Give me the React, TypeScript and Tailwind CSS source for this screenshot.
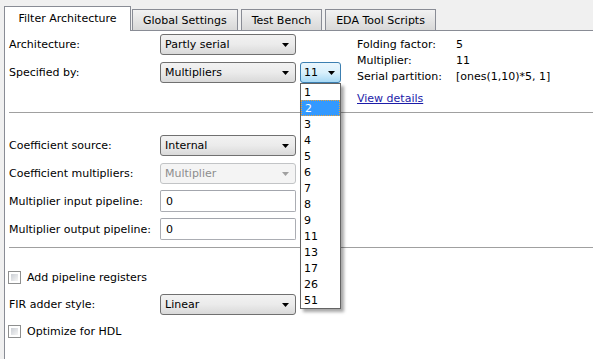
import React from "react";

const font = { fontFamily: '"DejaVu Sans", Verdana, sans-serif' };

function Arrow({ disabled }: { disabled?: boolean }) {
  return (
    <svg width="7" height="4" viewBox="0 0 7 4" className="shrink-0">
      <path d="M0 0h7L3.5 4z" fill={disabled ? "#a0a0a0" : "#000"} />
    </svg>
  );
}

function Select({ value, disabled }: { value: string; disabled?: boolean }) {
  return (
    <div
      className={`flex h-[21px] w-[136px] items-center justify-between rounded-[3px] border pl-[4px] pr-[6px] ${
        disabled
          ? "border-[#c2c4c6] bg-[#f4f4f4] text-[#8d8d8d]"
          : "border-[#707070] bg-gradient-to-b from-[#f2f2f2] via-[#ebebeb] to-[#d9d9d9] text-black"
      }`}
    >
      <span>{value}</span>
      <Arrow disabled={disabled} />
    </div>
  );
}

function TextInput({ value }: { value: string }) {
  return (
    <div className="flex h-[22px] w-[136px] items-center rounded-[2px] border border-[#abadb3] border-t-[#a3a6ad] bg-white pl-[5px]">
      {value}
    </div>
  );
}

function Row({ label, children }: { label: string; children: React.ReactNode }) {
  return (
    <div className="flex items-center">
      <span className="w-[151px] shrink-0">{label}</span>
      {children}
    </div>
  );
}

function Checkbox({ label }: { label: string }) {
  return (
    <div className="flex h-[21px] items-center gap-[6px]">
      <span className="h-[13px] w-[13px] border border-[#8e8f8f] bg-white p-[2px]">
        <span className="block h-full w-full bg-gradient-to-br from-[#cbcfd5] to-[#f6f6f6]" />
      </span>
      <span>{label}</span>
    </div>
  );
}

function Tab({ label, active }: { label: string; active?: boolean }) {
  if (active)
    return (
      <div className="relative z-10 -mb-[1px] flex h-[25px] w-[127px] items-center justify-center border border-b-0 border-[#898c95] bg-white pb-[1px]">
        {label}
      </div>
    );
  return (
    <div className="flex h-[21px] items-center border border-b-0 border-[#898c95] bg-gradient-to-b from-[#f2f2f2] to-[#d8d8d8] px-[10px]">
      {label}
    </div>
  );
}

const items = ["1", "2", "3", "4", "5", "6", "7", "8", "9", "11", "13", "17", "26", "51"];

export default function App() {
  return (
    <div
      className="relative flex h-[359px] w-[593px] flex-col overflow-hidden bg-[#f0f0f0] text-[11px] leading-none text-black"
      style={font}
    >
      <div className="flex h-[30px] shrink-0 items-end gap-[1px] pl-[4px]">
        <Tab label="Filter Architecture" active />
        <Tab label="Global Settings" />
        <div className="w-[1px]" />
        <Tab label="Test Bench" />
        <div className="w-[1px]" />
        <Tab label="EDA Tool Scripts" />
      </div>

      <div className="ml-[4px] flex-1 border-t border-l border-[#898c95] bg-white">
        <div className="flex h-[81px]">
          <div className="flex flex-col gap-[7px] pt-[3px] pl-[4px]">
            <Row label="Architecture:">
              <Select value="Partly serial" />
            </Row>
            <Row label="Specified by:">
              <Select value="Multipliers" />
            </Row>
          </div>

          <div className="relative ml-[4px] pt-[31px]">
            <div className="flex h-[21px] w-[41px] items-center justify-between rounded-[3px] border border-[#3c7fb1] bg-gradient-to-b from-[#eaf6fd] via-[#d9f0fc] to-[#a7d9f5] pl-[3px] pr-[5px]">
              <span>11</span>
              <Arrow />
            </div>
            <div className="absolute top-[52px] left-0 z-20 w-[41px] border border-[#646464] bg-white shadow-[3px_3px_3px_rgba(0,0,0,0.35)]">
              {items.map((v) => (
                <div
                  key={v}
                  className={`flex h-[16px] items-center pl-[3px] ${
                    v === "2"
                      ? "border border-dotted border-[#e8a33b] bg-[#3399ff] pl-[2px] text-white"
                      : ""
                  }`}
                >
                  {v}
                </div>
              ))}
            </div>
          </div>

          <div className="ml-[16px] flex flex-col pt-[5px]">
            <div className="flex h-[16px] items-center">
              <span className="w-[99px]">Folding factor:</span>
              <span>5</span>
            </div>
            <div className="flex h-[16px] items-center">
              <span className="w-[99px]">Multiplier:</span>
              <span>11</span>
            </div>
            <div className="flex h-[16px] items-center">
              <span className="w-[99px]">Serial partition:</span>
              <span>[ones(1,10)*5, 1]</span>
            </div>
            <div className="mt-[6px] flex h-[16px] items-center">
              <span className="text-[#1c1ca8] underline">View details</span>
            </div>
          </div>
        </div>

        <div className="ml-[4px] h-[1px] bg-[#a0a0a0]" />

        <div className="flex h-[134px] flex-col pt-[22px] pl-[4px]">
          <Row label="Coefficient source:">
            <Select value="Internal" />
          </Row>
          <div className="h-[7px]" />
          <Row label="Coefficient multipliers:">
            <Select value="Multiplier" disabled />
          </Row>
          <div className="h-[6px]" />
          <Row label="Multiplier input pipeline:">
            <TextInput value="0" />
          </Row>
          <div className="h-[6px]" />
          <Row label="Multiplier output pipeline:">
            <TextInput value="0" />
          </Row>
        </div>

        <div className="ml-[4px] h-[1px] bg-[#a0a0a0]" />

        <div className="flex flex-col gap-[6px] pt-[19px] pl-[3px]">
          <Checkbox label="Add pipeline registers" />
          <div className="pl-[1px]">
            <Row label="FIR adder style:">
              <Select value="Linear" />
            </Row>
          </div>
          <Checkbox label="Optimize for HDL" />
        </div>
      </div>
    </div>
  );
}
